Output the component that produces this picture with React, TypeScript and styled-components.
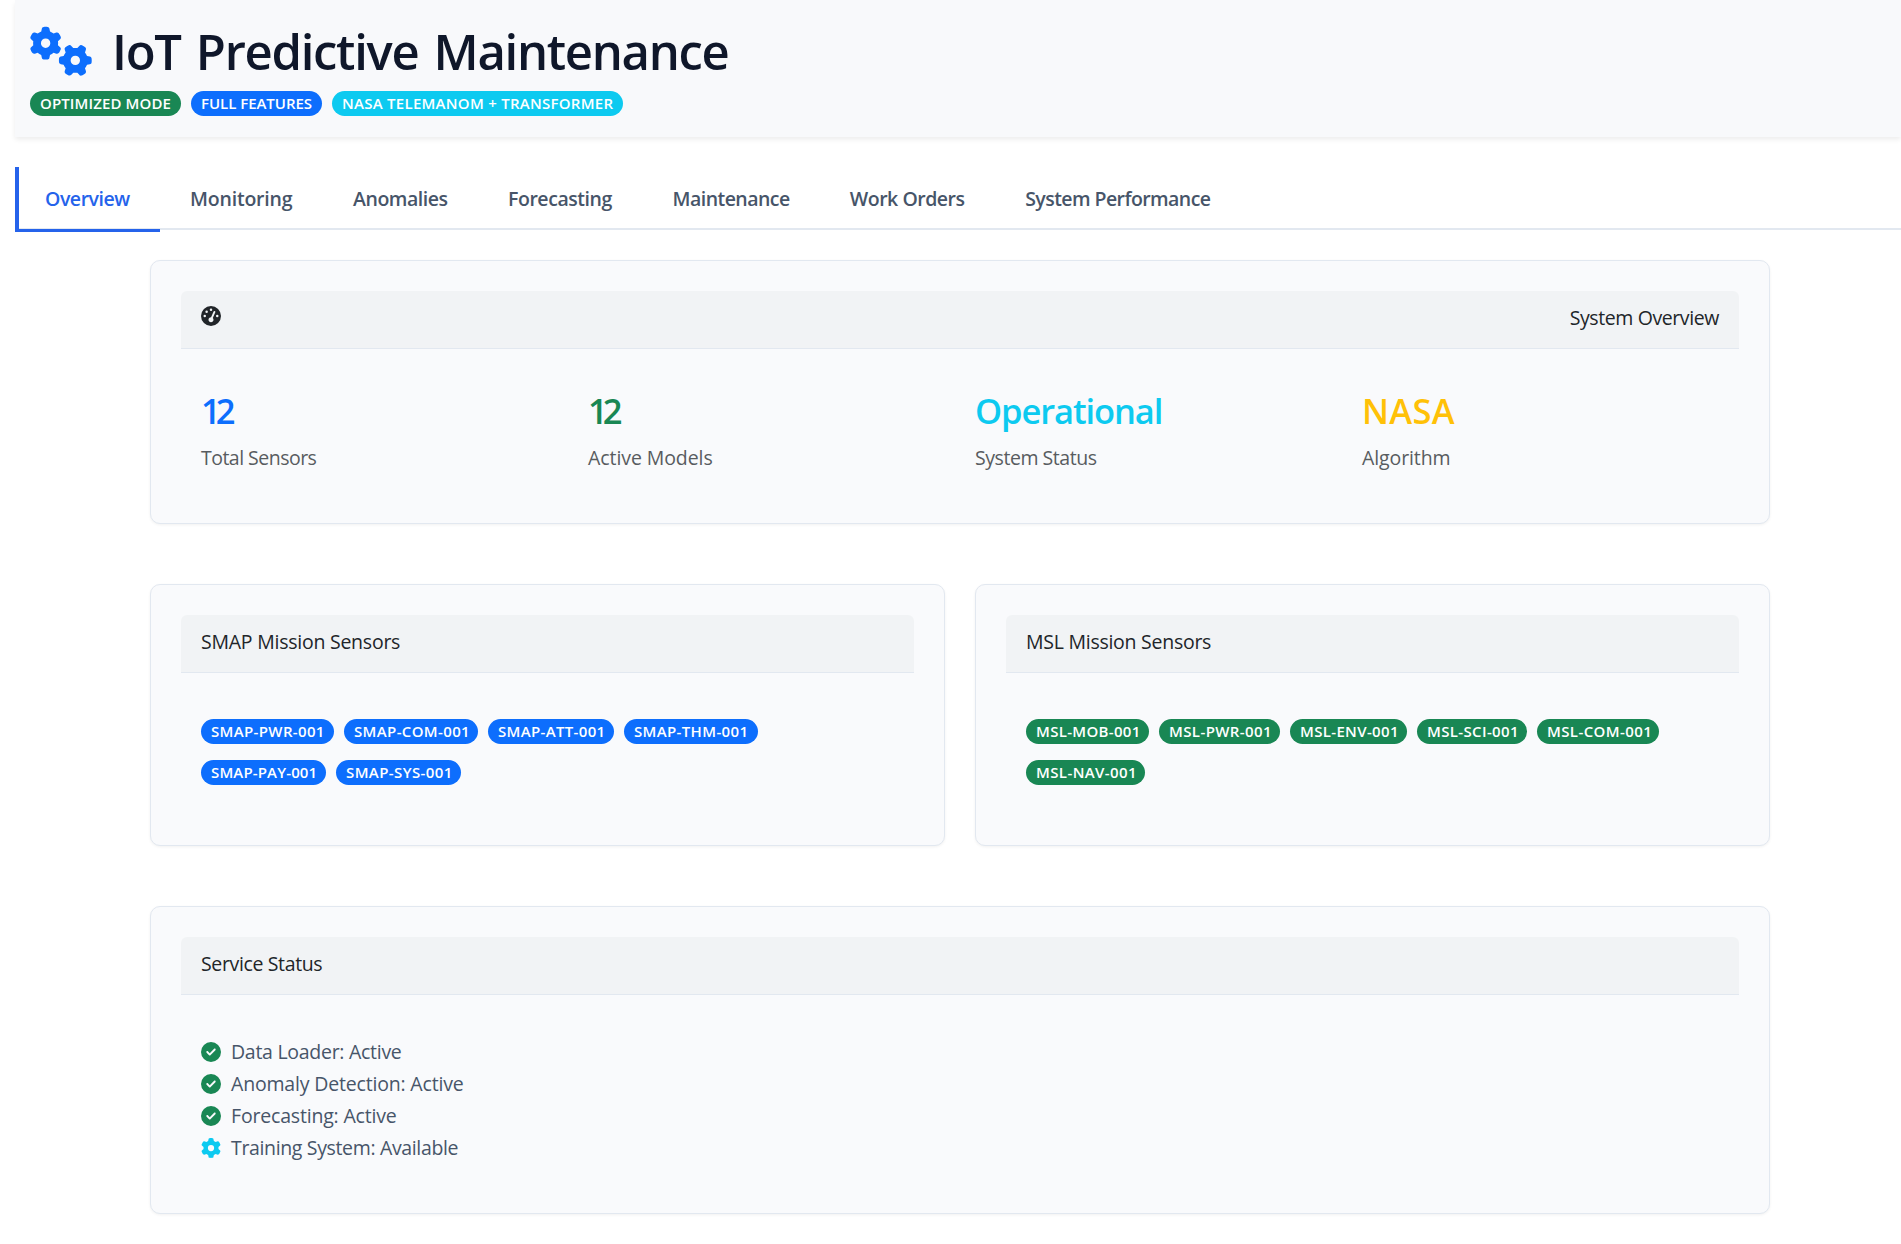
import React from "react";
import styled, { createGlobalStyle } from "styled-components";
import { FaCircleCheck, FaGaugeHigh, FaGear, FaGears } from "react-icons/fa6";

const colors = {
  primary: "#0d6efd",
  success: "#198754",
  info: "#0dcaf0",
  warning: "#ffc107",
  border: "#e2e8f0",
};

const GlobalStyle = createGlobalStyle`
  *, *::before, *::after { box-sizing: border-box; }
  body {
    margin: 0;
    background: #ffffff;
    color: #212529;
    font-family: "Open Sans", "Noto Sans", sans-serif;
    font-size: 19.5px;
    line-height: 30px;
    overflow: hidden;
  }
`;

const Page = styled.div`
  min-height: 1244px;
  padding-left: 15px;
`;

const Header = styled.header`
  height: 137px;
  padding: 21px 15px 0;
  background: #f8f9fb;
  box-shadow: 0 2.5px 5px rgba(0, 0, 0, 0.075);
`;

const Title = styled.h1`
  display: flex;
  align-items: center;
  gap: 19.5px;
  height: 60px;
  margin: 0 0 10px;
  color: #0f172a;
  font-size: 49px;
  font-weight: 560;
  line-height: 60px;
  letter-spacing: -1.3px;
  word-spacing: 3.8px;
  white-space: nowrap;

  svg {
    width: 62.5px;
    height: 50px;
    color: ${colors.primary};
  }
`;

const BadgeRow = styled.div`
  display: flex;
  flex-wrap: wrap;
  gap: 16px 10px;
`;

const Badge = styled.span<{ $color: string; $width: number; $tracking: number }>`
  width: ${(p) => p.$width}px;
  height: 25px;
  padding-left: 10px;
  border-radius: 12.5px;
  background: ${(p) => p.$color};
  color: #ffffff;
  font-size: 15px;
  font-weight: 600;
  line-height: 25px;
  letter-spacing: ${(p) => p.$tracking}px;
  white-space: nowrap;
`;

const Tabs = styled.nav`
  display: flex;
  height: 63px;
  margin-top: 30px;
  border-bottom: 2px solid ${colors.border};
`;

const Tab = styled.a<{ $active?: boolean; $width: number; $tracking: number }>`
  flex: none;
  width: ${(p) => p.$width}px;
  height: 65px;
  padding: 17px 0 0 ${(p) => (p.$active ? 26 : 30)}px;
  border: solid ${(p) => (p.$active ? "#2563eb" : "transparent")};
  border-width: ${(p) => (p.$active ? "0 0 3px 4px" : "0")};
  color: ${(p) => (p.$active ? "#2563eb" : "#475569")};
  font-weight: 560;
  letter-spacing: ${(p) => p.$tracking}px;
  white-space: nowrap;
`;

const Main = styled.main`
  display: grid;
  grid-template-columns: 795px 795px;
  gap: 60px 30px;
  margin: 30px 0 0 135px;
`;

const Card = styled.section<{ $wide?: boolean; $height: number }>`
  grid-column: ${(p) => (p.$wide ? "1 / -1" : "auto")};
  height: ${(p) => p.$height}px;
  padding: 30px;
  border: 1px solid ${colors.border};
  border-radius: 10px;
  background: #f9fafc;
  box-shadow: 0 1px 3px rgba(0, 0, 0, 0.06);
`;

const CardHeader = styled.div<{ $tracking: number }>`
  display: flex;
  justify-content: space-between;
  height: 58px;
  padding: 12px 20px 0;
  border-bottom: 1px solid ${colors.border};
  border-radius: 6px 6px 0 0;
  background: #f1f3f5;
  letter-spacing: ${(p) => p.$tracking}px;

  svg {
    width: 20px;
    height: 20px;
    margin-top: 3px;
  }
`;

const Stats = styled.div`
  display: grid;
  grid-template-columns: repeat(4, 387px);
  padding: 41px 0 0 20px;
`;

const StatValue = styled.h3<{ $color: string; $tracking: number }>`
  margin: 0 0 11px;
  color: ${(p) => p.$color};
  font-size: 34.5px;
  font-weight: 560;
  line-height: 42px;
  letter-spacing: ${(p) => p.$tracking}px;
`;

const StatLabel = styled.p<{ $tracking: number }>`
  margin: 0;
  color: #585c60;
  letter-spacing: ${(p) => p.$tracking}px;
`;

const SensorList = styled(BadgeRow)`
  padding: 46px 40px 0 20px;
`;

const StatusList = styled.ul`
  margin: 0;
  padding: 41px 0 0 20px;
  list-style: none;
`;

const StatusItem = styled.li<{ $color: string; $tracking: number }>`
  display: flex;
  align-items: center;
  gap: 10px;
  height: 32px;
  color: #475569;
  line-height: 32px;
  letter-spacing: ${(p) => p.$tracking}px;

  svg {
    width: 20px;
    height: 20px;
    margin-bottom: 1px;
    color: ${(p) => p.$color};
  }
`;

type Entry = [label: string, width: number, tracking: number];

const modes: { entry: Entry; color: string }[] = [
  { entry: ["OPTIMIZED MODE", 151, 0.12], color: colors.success },
  { entry: ["FULL FEATURES", 131, -0.03], color: colors.primary },
  { entry: ["NASA TELEMANOM + TRANSFORMER", 291, 0.27], color: colors.info },
];

const tabs: Entry[] = [
  ["Overview", 145, -0.45],
  ["Monitoring", 163, -0.2],
  ["Anomalies", 155, -0.45],
  ["Forecasting", 164.5, -0.45],
  ["Maintenance", 177.3, -0.53],
  ["Work Orders", 175.4, -0.48],
  ["System Performance", 245, -0.57],
];

const stats = [
  { value: "12", vt: -5, color: colors.primary, label: "Total Sensors", lt: -0.52 },
  { value: "12", vt: -5, color: colors.success, label: "Active Models", lt: -0.08 },
  { value: "Operational", vt: -1.1, color: colors.info, label: "System Status", lt: -0.45 },
  { value: "NASA", vt: 0.3, color: colors.warning, label: "Algorithm", lt: -0.1 },
];

const smap: Entry[] = [
  ["SMAP-PWR-001", 133, 0.35],
  ["SMAP-COM-001", 134, 0.36],
  ["SMAP-ATT-001", 126, 0.34],
  ["SMAP-THM-001", 134, 0.35],
  ["SMAP-PAY-001", 125, 0.14],
  ["SMAP-SYS-001", 125, 0.4],
];

const msl: Entry[] = [
  ["MSL-MOB-001", 123, 0.32],
  ["MSL-PWR-001", 121, 0.4],
  ["MSL-ENV-001", 117, 0.34],
  ["MSL-SCI-001", 110, 0.36],
  ["MSL-COM-001", 122, 0.4],
  ["MSL-NAV-001", 119, 0.4],
];

const services = [
  { Icon: FaCircleCheck, color: colors.success, text: "Data Loader: Active", tracking: -0.28 },
  { Icon: FaCircleCheck, color: colors.success, text: "Anomaly Detection: Active", tracking: -0.18 },
  { Icon: FaCircleCheck, color: colors.success, text: "Forecasting: Active", tracking: -0.18 },
  { Icon: FaGear, color: colors.info, text: "Training System: Available", tracking: -0.35 },
];

function Sensors({ items, color }: { items: Entry[]; color: string }) {
  return (
    <SensorList>
      {items.map(([label, width, tracking]) => (
        <Badge key={label} $color={color} $width={width} $tracking={tracking}>
          {label}
        </Badge>
      ))}
    </SensorList>
  );
}

export default function App() {
  return (
    <Page>
      <GlobalStyle />
      <Header>
        <Title>
          <FaGears />
          IoT Predictive Maintenance
        </Title>
        <BadgeRow>
          {modes.map(({ entry: [label, width, tracking], color }) => (
            <Badge key={label} $color={color} $width={width} $tracking={tracking}>
              {label}
            </Badge>
          ))}
        </BadgeRow>
      </Header>
      <Tabs>
        {tabs.map(([label, width, tracking], i) => (
          <Tab key={label} $active={i === 0} $width={width} $tracking={tracking}>
            {label}
          </Tab>
        ))}
      </Tabs>
      <Main>
        <Card $wide $height={264}>
          <CardHeader $tracking={-0.4}>
            <FaGaugeHigh />
            <span>System Overview</span>
          </CardHeader>
          <Stats>
            {stats.map((s) => (
              <div key={s.label}>
                <StatValue $color={s.color} $tracking={s.vt}>
                  {s.value}
                </StatValue>
                <StatLabel $tracking={s.lt}>{s.label}</StatLabel>
              </div>
            ))}
          </Stats>
        </Card>
        <Card $height={262}>
          <CardHeader $tracking={-0.24}>SMAP Mission Sensors</CardHeader>
          <Sensors items={smap} color={colors.primary} />
        </Card>
        <Card $height={262}>
          <CardHeader $tracking={-0.26}>MSL Mission Sensors</CardHeader>
          <Sensors items={msl} color={colors.success} />
        </Card>
        <Card $wide $height={308}>
          <CardHeader $tracking={-0.36}>Service Status</CardHeader>
          <StatusList>
            {services.map(({ Icon, color, text, tracking }) => (
              <StatusItem key={text} $color={color} $tracking={tracking}>
                <Icon />
                {text}
              </StatusItem>
            ))}
          </StatusList>
        </Card>
      </Main>
    </Page>
  );
}
